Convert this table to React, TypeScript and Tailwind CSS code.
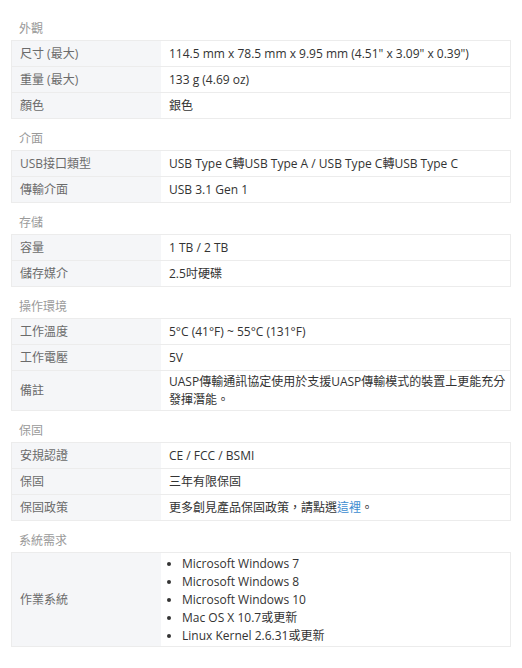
import React from "react";

type Row = { label: string; value: React.ReactNode };
type Section = { title: string; rows: Row[] };

const sections: Section[] = [
  {
    title: "外觀",
    rows: [
      { label: "尺寸 (最大)", value: '114.5 mm x 78.5 mm x 9.95 mm (4.51" x 3.09" x 0.39")' },
      { label: "重量 (最大)", value: "133 g (4.69 oz)" },
      { label: "顏色", value: "銀色" },
    ],
  },
  {
    title: "介面",
    rows: [
      { label: "USB接口類型", value: "USB Type C轉USB Type A / USB Type C轉USB Type C" },
      { label: "傳輸介面", value: "USB 3.1 Gen 1" },
    ],
  },
  {
    title: "存儲",
    rows: [
      { label: "容量", value: "1 TB / 2 TB" },
      { label: "儲存媒介", value: "2.5吋硬碟" },
    ],
  },
  {
    title: "操作環境",
    rows: [
      { label: "工作溫度", value: "5°C (41°F) ~ 55°C (131°F)" },
      { label: "工作電壓", value: "5V" },
      { label: "備註", value: "UASP傳輸通訊協定使用於支援UASP傳輸模式的裝置上更能充分發揮潛能。" },
    ],
  },
  {
    title: "保固",
    rows: [
      { label: "安規認證", value: "CE / FCC / BSMI" },
      { label: "保固", value: "三年有限保固" },
      {
        label: "保固政策",
        value: (
          <>
            更多創見產品保固政策，請點選<a className="text-[#3b8bd0]">這裡</a>。
          </>
        ),
      },
    ],
  },
  {
    title: "系統需求",
    rows: [
      {
        label: "作業系統",
        value: (
          <ul className="list-disc pl-[13px]">
            {[
              "Microsoft Windows 7",
              "Microsoft Windows 8",
              "Microsoft Windows 10",
              "Mac OS X 10.7或更新",
              "Linux Kernel 2.6.31或更新",
            ].map((t) => (
              <li key={t} className="leading-[18px]">{t}</li>
            ))}
          </ul>
        ),
      },
    ],
  },
];

export default function App() {
  return (
    <main
      lang="zh-TW"
      className="min-h-screen bg-white px-[11px] pt-[22px] text-[12px]"
      style={{ fontFamily: '"Open Sans", "Noto Sans CJK TC", sans-serif' }}
    >
      {sections.map((s, i) => (
        <section key={s.title} className={i === 0 ? "" : "mt-[13px]"}>
          {/* 分類標題 */}
          <h3 className="px-[8px] pb-[4px] leading-[14px] text-[#9a9a9a]">{s.title}</h3>
          <div className="w-[500px] border border-[#ececec]">
            {s.rows.map((r, j) => (
              <div key={r.label} className={`flex ${j > 0 ? "border-t border-[#ececec]" : ""}`}>
                <div className="flex w-[149px] shrink-0 items-center bg-[#f5f6f8] px-[8px] text-[#6b6b6b]">
                  {r.label}
                </div>
                <div className="flex min-h-[25px] flex-1 items-center pt-[2px] pb-[1px] pl-[8px] pr-[3px] leading-[18px] text-[#333]">
                  <div>{r.value}</div>
                </div>
              </div>
            ))}
          </div>
        </section>
      ))}
    </main>
  );
}
